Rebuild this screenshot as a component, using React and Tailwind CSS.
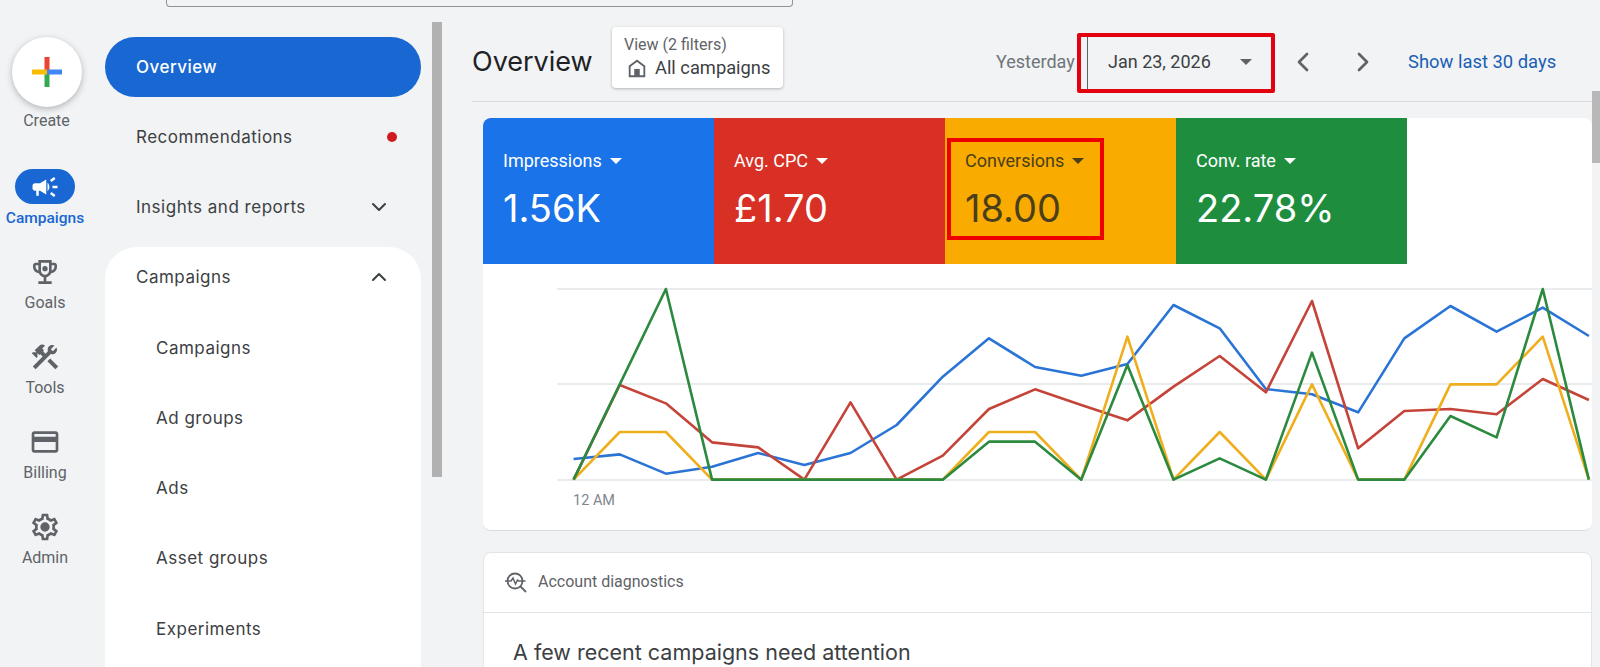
import { ChevronDown, ChevronUp, ChevronLeft, ChevronRight } from 'lucide-react'

const railItems = [
  { label: 'Goals', path: 'M19 5h-2V3H7v2H5c-1.1 0-2 .9-2 2v1c0 2.55 1.92 4.63 4.39 4.94.63 1.5 1.98 2.63 3.61 2.96V19H7v2h10v-2h-4v-3.1c1.63-.33 2.98-1.46 3.61-2.96C19.08 12.63 21 10.55 21 8V7c0-1.1-.9-2-2-2zM5 8V7h2v3.82C5.84 10.4 5 9.3 5 8zm7 6c-1.65 0-3-1.35-3-3V5h6v6c0 1.65-1.35 3-3 3zm7-6c0 1.3-.84 2.4-2 2.82V7h2v1zM12 7.5a2 2 0 1 0 0 4 2 2 0 0 0 0-4z' },
  { label: 'Tools', path: 'M13.783 15.172l2.121-2.121 5.996 5.996-2.121 2.121zM17.5 10c1.93 0 3.5-1.57 3.5-3.5 0-.58-.16-1.12-.41-1.6l-2.7 2.7-1.49-1.49 2.7-2.7c-.48-.25-1.02-.41-1.6-.41C15.57 3 14 4.57 14 6.5c0 .41.08.8.21 1.16l-1.85 1.85-1.78-1.78.71-.71-1.41-1.41L12 3.49c-1.17-1.17-3.07-1.17-4.24 0L4.22 7.03l1.41 1.41H2.81l-.71.71 3.54 3.54.71-.71V9.15l1.41 1.41.71-.71 1.78 1.78-7.41 7.41 2.12 2.12L16.34 9.79c.36.13.75.21 1.16.21z' },
  { label: 'Billing', path: 'M20 4H4c-1.11 0-1.99.89-1.99 2L2 18c0 1.11.89 2 2 2h16c1.11 0 2-.89 2-2V6c0-1.11-.89-2-2-2zm0 14H4v-6h16v6zm0-10H4V6h16v2z' },
  { label: 'Admin', path: 'M19.43 12.98c.04-.32.07-.64.07-.98 0-.34-.03-.66-.07-.98l2.11-1.65c.19-.15.24-.42.12-.64l-2-3.46c-.09-.16-.26-.25-.44-.25-.06 0-.12.01-.17.03l-2.49 1c-.52-.4-1.08-.73-1.69-.98l-.38-2.65C14.46 2.18 14.25 2 14 2h-4c-.25 0-.46.18-.49.42l-.38 2.65c-.61.25-1.17.59-1.69.98l-2.49-1c-.06-.02-.12-.03-.18-.03-.17 0-.34.09-.43.25l-2 3.46c-.13.22-.07.49.12.64l2.11 1.65c-.04.32-.07.65-.07.98 0 .33.03.66.07.98l-2.11 1.65c-.19.15-.24.42-.12.64l2 3.46c.09.16.26.25.44.25.06 0 .12-.01.17-.03l2.49-1c.52.4 1.08.73 1.69.98l.38 2.65c.03.24.24.42.49.42h4c.25 0 .46-.18.49-.42l.38-2.65c.61-.25 1.17-.59 1.69-.98l2.49 1c.06.02.12.03.18.03.17 0 .34-.09.43-.25l2-3.46c.12-.22.07-.49-.12-.64l-2.11-1.65zm-1.98-1.71c.04.31.05.52.05.73 0 .21-.02.43-.05.73l-.14 1.13.89.7 1.08.84-.7 1.21-1.27-.51-1.04-.42-.9.68c-.43.32-.84.56-1.25.73l-1.06.43-.16 1.13-.2 1.35h-1.4l-.19-1.35-.16-1.13-1.06-.43c-.43-.18-.83-.41-1.23-.71l-.91-.7-1.06.43-1.27.51-.7-1.21 1.08-.84.89-.7-.14-1.13c-.03-.31-.05-.54-.05-.74s.02-.43.05-.73l.14-1.13-.89-.7-1.08-.84.7-1.21 1.27.51 1.04.42.9-.68c.43-.32.84-.56 1.25-.73l1.06-.43.16-1.13.2-1.35h1.39l.19 1.35.16 1.13 1.06.43c.43.18.83.41 1.23.71l.91.7 1.06-.43 1.27-.51.7 1.21-1.07.85-.89.7.14 1.13zM12 8.5a3.5 3.5 0 1 0 0 7 3.5 3.5 0 0 0 0-7z' },
]

const tiles = [
  { label: 'Impressions', value: '1.56K', bg: 'bg-[#1a73e8]', text: 'text-white' },
  { label: 'Avg. CPC', value: '£1.70', bg: 'bg-[#d93025]', text: 'text-white' },
  { label: 'Conversions', value: '18.00', bg: 'bg-[#f9ab00]', text: 'text-[#4a3f1c]' },
  { label: 'Conv. rate', value: '22.78%', bg: 'bg-[#1e8e3e]', text: 'text-white' },
]

// y values read off the reference, one per hour slot
const series = [
  { color: '#2a74d6', ys: [567, 553, 611, 590, 549, 585, 549, 465, 320, 205, 291, 317, 282, 105, 175, 357, 373, 427, 205, 108, 185, 113, 198] },
  { color: '#c5443a', ys: [629, 345, 400, 517, 532, 629, 397, 629, 557, 417, 358, 405, 451, 350, 258, 367, 93, 535, 423, 417, 433, 327, 390] },
  { color: '#efae1c', ys: [629, 486, 486, 629, 629, 629, 629, 629, 629, 486, 486, 629, 200, 629, 486, 629, 343, 629, 629, 343, 343, 200, 629] },
  { color: '#2b8a3e', ys: [629, 343, 57, 629, 629, 629, 629, 629, 629, 515, 515, 629, 285, 629, 565, 629, 248, 629, 629, 438, 502, 57, 629] },
]

const toPoints = (ys) => ys.map((v, i) => `${90.6 + 46.15 * i},${6 + v / 3}`).join(' ')

function RailIcon({ path, className }) {
  return (
    <svg viewBox="0 0 24 24" width="32" height="32" className={className} fill="currentColor">
      <path d={path} />
    </svg>
  )
}

function Caret({ className }) {
  return (
    <svg viewBox="0 0 12 6" width="12" height="6" className={className} fill="currentColor">
      <path d="M0 0h12L6 6z" />
    </svg>
  )
}

function NavItem({ label, sub, children }) {
  return (
    <div className={`h-[60px] flex items-center justify-between pr-[30px] text-[17px] tracking-[0.5px] text-[#3c4043] font-['Inter',sans-serif] ${sub ? 'pl-[51px]' : 'pl-[31px]'}`}>
      <span className="pt-[2px]">{label}</span>
      {children}
    </div>
  )
}

export default function App() {
  return (
    <div className="relative w-[1600px] h-[667px] overflow-hidden bg-[#f1f3f4] font-['Roboto',sans-serif]">
      {/* Search box, cut off by the window */}
      <div className="ml-[166px] w-[627px] h-[7px] border-x border-b border-[#8f9296] rounded-b-[4px]" />

      <div className="flex">
        {/* Rail */}
        <aside className="w-[93px] flex-shrink-0 flex flex-col items-center text-[16px] text-[#5f6368]">
          <div className="mt-[30px] w-[70px] h-[70px] rounded-full bg-white shadow-[0_2px_6px_rgba(60,64,67,0.35)] flex items-center justify-center">
            <svg viewBox="0 0 30 30" width="30" height="30">
              <rect x="12.5" y="0" width="5" height="15" fill="#ea4335" />
              <rect x="12.5" y="15" width="5" height="15" fill="#34a853" />
              <rect x="0" y="12.5" width="15" height="5" fill="#fbbc04" />
              <rect x="15" y="12.5" width="15" height="5" fill="#4285f4" />
            </svg>
          </div>
          <span className="mt-[4px] h-5 leading-5">Create</span>

          <div className="mt-[39.5px] pr-[3px] flex flex-col items-center gap-[27.5px]">
            <div className="flex flex-col items-center gap-[5.5px]">
              <div className="w-[60px] h-[35px] -my-[1.5px] rounded-full bg-[#1967d2] flex items-center justify-center text-white">
                <svg viewBox="0 0 24 24" width="30" height="30" fill="currentColor">
                  <path d="M18 11v2h4v-2h-4zm-2 6.61c.96.71 2.21 1.65 3.2 2.39.4-.53.8-1.07 1.2-1.6-.99-.74-2.24-1.68-3.2-2.4-.4.54-.8 1.08-1.2 1.61zM20.4 5.6c-.4-.53-.8-1.07-1.2-1.6-.99.74-2.24 1.68-3.2 2.4.4.53.8 1.07 1.2 1.6.96-.72 2.21-1.65 3.2-2.4zM4 9c-1.1 0-2 .9-2 2v2c0 1.1.9 2 2 2h1v4h2v-4h1l5 3V6L8 9H4zm11.5 3c0-1.33-.58-2.53-1.5-3.35v6.69c.92-.81 1.5-2.01 1.5-3.34z" />
                </svg>
              </div>
              <span className="h-5 leading-5 text-[15.5px] font-medium text-[#1967d2]">Campaigns</span>
            </div>
            {railItems.map((item) => (
              <div key={item.label} className="flex flex-col items-center gap-[5.5px]">
                <RailIcon path={item.path} />
                <span className="h-5 leading-5">{item.label}</span>
              </div>
            ))}
          </div>
        </aside>

        {/* Side nav */}
        <nav className="ml-[12px] w-[316px] flex-shrink-0 flex flex-col gap-[10px] pt-[30px]">
          <div className="h-[60px] pt-[2px] rounded-full bg-[#1967d2] flex items-center pl-[31px] text-[17px] tracking-[0.5px] font-medium text-white font-['Inter',sans-serif]">
            Overview
          </div>
          <NavItem label="Recommendations">
            <span className="w-[10px] h-[10px] rounded-full bg-[#d01c1f] -mr-[5.5px]" />
          </NavItem>
          <NavItem label="Insights and reports">
            <ChevronDown size={24} strokeWidth={2} className="text-[#3c4043]" />
          </NavItem>
          <div className="rounded-t-[32px] bg-white flex flex-col gap-[10.3px] h-[500px]">
            <NavItem label="Campaigns">
              <ChevronUp size={24} strokeWidth={2} className="text-[#3c4043]" />
            </NavItem>
            <NavItem sub label="Campaigns" />
            <NavItem sub label="Ad groups" />
            <NavItem sub label="Ads" />
            <NavItem sub label="Asset groups" />
            <NavItem sub label="Experiments" />
          </div>
        </nav>

        {/* Nav scrollbar */}
        <div className="ml-[11px] mt-[15px] w-[10px] h-[455px] bg-[#b1b1b1] flex-shrink-0" />

        {/* Main */}
        <main className="w-[1150px] flex-shrink-0">
          <header className="ml-[30px] h-[95px] pt-[13px] flex items-center border-b border-[#dadce0]">
            <h1 className="w-[118px] mt-[4px] text-[27px] text-[#202124] font-['Inter',sans-serif] whitespace-nowrap">Overview</h1>
            <div className="ml-[22px] -mt-[7px] w-[171px] h-[61px] rounded bg-white shadow-[0_1px_3px_rgba(60,64,67,0.35)] pl-[14px] pt-[8px]">
              <div className="-ml-[2px] text-[16px] leading-[20px] text-[#5f6368]">View (2 filters)</div>
              <div className="flex items-center gap-[7px] text-[18.3px] leading-[26px] text-[#3c4043]">
                <svg viewBox="0 0 24 24" width="22" height="22" fill="none" stroke="#5f6368" strokeWidth="2">
                  <path d="M4 21V10l8-6 8 6v11z" />
                  <rect x="9" y="13" width="6" height="8" fill="#5f6368" stroke="none" />
                </svg>
                All campaigns
              </div>
            </div>
            <div className="ml-[213px] w-[80px] mt-[2px] text-[18px] text-[#70757a] whitespace-nowrap">Yesterday</div>
            <div className="ml-[11px] w-[178px] h-[56px] mt-[2px] border-l border-[#5f6368] pl-[20px] flex items-center justify-between pr-[13px] text-[18px] text-[#3c4043]">
              <span>Jan 23, 2026</span>
              <Caret className="text-[#5f6368]" />
            </div>
            <ChevronLeft size={32} strokeWidth={2} className="ml-[22px] mt-[2px] text-[#5f6368]" />
            <ChevronRight size={32} strokeWidth={2} className="ml-[28px] mt-[2px] text-[#5f6368]" />
            <a className="ml-[29px] mt-[2px] text-[18.4px] text-[#1a5fb4] whitespace-nowrap">Show last 30 days</a>
          </header>

          <section className="ml-[41px] mt-[16px] h-[413px] rounded-lg bg-white overflow-hidden border-b border-[#dadce0]">
            <div className="flex h-[146px]">
              {tiles.map((t) => (
                <div key={t.label} className={`w-[231px] pl-[20px] pt-[32px] ${t.bg} ${t.text}`}>
                  <div className="flex items-center gap-[8px] text-[18px] leading-[22px]">
                    {t.label}
                    <Caret />
                  </div>
                  <div className="mt-[12px] text-[38px] leading-[48px] font-['Inter',sans-serif] font-normal">{t.value}</div>
                </div>
              ))}
            </div>
            <svg viewBox="0 0 1109 266" width="1109" height="266" className="block">
              {[25, 120, 216].map((y) => (
                <line key={y} x1="74" x2="1109" y1={y} y2={y} stroke="#e3e4e6" strokeWidth="1.5" />
              ))}
              {series.map((s) => (
                <polyline key={s.color} points={toPoints(s.ys)} fill="none" stroke={s.color} strokeWidth="2.6" strokeLinejoin="round" />
              ))}
              <text x="90" y="241" fontSize="14.5" fill="#80868b" fontFamily="Roboto, sans-serif">12 AM</text>
            </svg>
          </section>

          <section className="ml-[41px] mt-[21px] h-[200px] rounded-t-lg bg-white border border-[#e3e4e6]">
            <div className="h-[60px] pb-[2px] flex items-center pl-[20px] gap-[10px] border-b border-[#e3e4e6] text-[16px] text-[#5f6368]">
              <svg viewBox="0 0 24 24" width="24" height="24" fill="none" stroke="#5f6368" strokeWidth="1.8">
                <circle cx="11" cy="11" r="7.5" />
                <path d="M16.5 16.5 22 22" />
                <path d="M1 11h6l2-3 2.5 6 2-4 1 1h7" strokeWidth="1.5" />
              </svg>
              Account diagnostics
            </div>
            <h2 className="pl-[29px] pt-[25px] text-[21.5px] leading-[28px] text-[#3c4043] font-['Inter',sans-serif]">A few recent campaigns need attention</h2>
          </section>
        </main>

        {/* Page scrollbar */}
        <div className="mt-[84px] w-[8px] h-[72px] bg-[#b8b8b8] flex-shrink-0" />
      </div>

      {/* Red annotation boxes */}
      <div className="absolute left-[1077px] top-[33px] w-[198px] h-[60px] border-[4px] border-[#e3000f] rounded-[2px]" />
      <div className="absolute left-[947px] top-[138px] w-[157px] h-[102px] border-[4px] border-[#ee0000]" />
    </div>
  )
}
